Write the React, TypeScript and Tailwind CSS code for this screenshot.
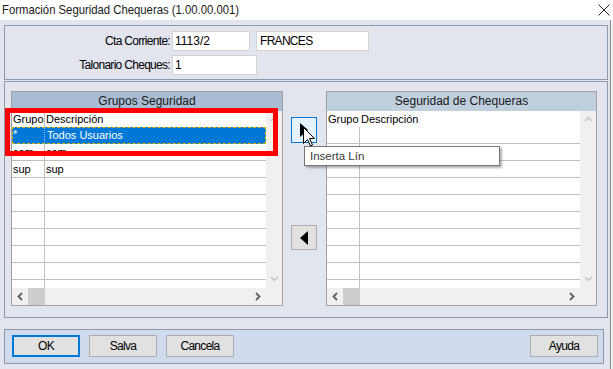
import React from 'react'

type Row = { g: string; d: string; sel?: boolean }

function ChevronUp() {
  return (
    <svg width="9" height="6" viewBox="0 0 9 6" fill="none" stroke="#c4c4c4" strokeWidth={1.5}>
      <path d="M1 5 4.5 1.5 8 5" />
    </svg>
  )
}

function ChevronDown() {
  return (
    <svg width="9" height="6" viewBox="0 0 9 6" fill="none" stroke="#c4c4c4" strokeWidth={1.5}>
      <path d="M1 1 4.5 4.5 8 1" />
    </svg>
  )
}

function ChevronLeft() {
  return (
    <svg width="6" height="9" viewBox="0 0 6 9" fill="none" stroke="#606060" strokeWidth={1.8}>
      <path d="M5 1 1.5 4.5 5 8" />
    </svg>
  )
}

function ChevronRight() {
  return (
    <svg width="6" height="9" viewBox="0 0 6 9" fill="none" stroke="#606060" strokeWidth={1.8}>
      <path d="M1 1 4.5 4.5 1 8" />
    </svg>
  )
}

function Grid({
  title,
  headerClass,
  widthClass,
  rows,
  headerDivider,
}: {
  title: string
  headerClass: string
  widthClass: string
  rows: Row[]
  headerDivider: boolean
}) {
  const filled = [...rows]
  while (filled.length < 10) filled.push({ g: '', d: '' })

  return (
    <div className={`flex h-[215px] flex-col border border-[#a0a0a0] ${widthClass}`}>
      <div className={`h-[19px] text-center text-[12px] leading-[19px] text-[#1a1a1a] ${headerClass}`}>
        {title}
      </div>
      <div className="flex h-[177px]">
        <div className="flex flex-1 flex-col overflow-hidden bg-white text-[11px] leading-[16px]">
          <div className="flex h-[16px] shrink-0">
            <div
              className={`w-[33px] shrink-0 pl-[1px] ${headerDivider ? 'border-r border-[#c0c0c0]' : ''}`}
            >
              Grupo
            </div>
            <div className="pl-[1px]">Descripción</div>
          </div>
          {filled.map((r, i) =>
            r.sel ? (
              <div
                key={i}
                className="flex h-[17px] shrink-0 border border-dashed border-[#d4b000] bg-[#0078d7] text-white"
              >
                <div className="w-[32px] shrink-0 border-r border-dotted border-[#8fc0ec] leading-[13px]">*</div>
                <div className="pl-[2px] leading-[15px]">{r.d}</div>
              </div>
            ) : (
              <div key={i} className="flex h-[17px] shrink-0 border-b border-[#c0c0c0]">
                <div className="w-[33px] shrink-0 border-r border-[#c0c0c0] pl-[1px]">{r.g}</div>
                <div className="pl-[1px]">{r.d}</div>
              </div>
            )
          )}
        </div>
        <div className="flex w-[16px] flex-col items-center justify-between bg-[#f0f0f0] pt-[5px] pb-[6px]">
          <ChevronUp />
          <ChevronDown />
        </div>
      </div>
      <div className="flex h-[17px] bg-[#f0f0f0]">
        <div className="flex w-[16px] items-center justify-center">
          <ChevronLeft />
        </div>
        <div className="w-[17px] bg-[#cdcdcd]" />
        <div className="flex-1" />
        <div className="flex w-[16px] items-center justify-center">
          <ChevronRight />
        </div>
        <div className="w-[16px]" />
      </div>
    </div>
  )
}

export default function App() {
  return (
    <div className="relative h-[369px] w-[613px] overflow-hidden bg-[#f3f3f3] font-['Liberation_Sans',Arial,sans-serif] text-black">
      <div className="flex h-[20px] w-[613px] items-center justify-between bg-white pl-[2px] pr-[3px]">
        <span className="inline-block origin-left scale-x-[0.87] whitespace-nowrap text-[13px] text-[#1a1a1a]">
          Formación Seguridad Chequeras (1.00.00.001)
        </span>
        <svg width="12" height="12" viewBox="0 0 12 12" stroke="#222" strokeWidth={1}>
          <path d="M0.5 0.5 11.5 11.5M11.5 0.5 0.5 11.5" />
        </svg>
      </div>

      <div className="h-[349px] w-[611px] border-r border-[#8a8a8a] bg-[#e2e5ed] pl-[4px] pt-[5px]">
        <div className="flex h-[55px] w-[604px] flex-col gap-[4px] border border-[#8e98a6] pt-[5px] text-[12px]">
          <div className="flex h-[20px] items-center">
            <div className="w-[165px] text-right tracking-[-0.7px]">Cta Corriente:</div>
            <div className="ml-[2px] h-[20px] w-[78px] border border-[#d4d4d4] bg-white pl-[2px] leading-[18px]">
              1113/2
            </div>
            <div className="ml-[6px] h-[20px] w-[113px] border border-[#d4d4d4] bg-white pl-[3px] leading-[18px] tracking-[-0.7px]">
              FRANCES
            </div>
          </div>
          <div className="flex h-[20px] items-center">
            <div className="w-[165px] text-right tracking-[-0.7px]">Talonario Cheques:</div>
            <div className="ml-[2px] h-[20px] w-[85px] border border-[#d4d4d4] bg-white pl-[2px] leading-[18px]">
              1
            </div>
          </div>
        </div>

        <div className="mt-[1px] flex h-[237px] w-[604px] border border-[#8e98a6] pl-[6px] pt-[9px]">
          <Grid
            title="Grupos Seguridad"
            headerClass="bg-[#a8bdd4]"
            widthClass="w-[272px]"
            headerDivider
            rows={[
              { g: '*', d: 'Todos Usuarios', sel: true },
              { g: 'com', d: 'com' },
              { g: 'sup', d: 'sup' },
            ]}
          />
          <div className="flex w-[43px] flex-col pl-[8px]">
            <div className="mt-[26px] flex h-[26px] w-[26px] items-center justify-center border border-[#0078d7] bg-[#e5f1fb]">
              <svg width="8" height="14" viewBox="0 0 8 14">
                <path d="M0 0 8 7 0 14Z" fill="#000" />
              </svg>
            </div>
            <div className="mt-[82px] flex h-[25px] w-[26px] items-center justify-center border border-[#adadad] bg-[#e1e1e1]">
              <svg width="8" height="14" viewBox="0 0 8 14">
                <path d="M8 0 0 7 8 14Z" fill="#000" />
              </svg>
            </div>
          </div>
          <Grid
            title="Seguridad de Chequeras"
            headerClass="bg-[#c0cfdd]"
            widthClass="w-[271px]"
            headerDivider={false}
            rows={[{ g: '', d: '' }]}
          />
        </div>

        <div className="mt-[11px] flex h-[35px] w-[600px] border border-[#8e98a6] bg-[#d1dbee] pl-[7px] pr-[5px] pt-[5px] text-[12px] tracking-[-0.7px]">
          <div className="flex h-[22px] w-[68px] items-center justify-center border-2 border-[#0078d7] bg-[#e1e1e1]">OK</div>
          <div className="ml-[9px] flex h-[22px] w-[68px] items-center justify-center border border-[#adadad] bg-[#e1e1e1]">Salva</div>
          <div className="ml-[9px] flex h-[22px] w-[68px] items-center justify-center border border-[#adadad] bg-[#e1e1e1]">Cancela</div>
          <div className="ml-auto flex h-[22px] w-[68px] items-center justify-center border border-[#adadad] bg-[#e1e1e1]">Ayuda</div>
        </div>
      </div>

      {/* annotation box */}
      <div className="absolute left-[5px] top-[108px] h-[48px] w-[273px] border-[5px] border-[#ff0000]" />

      {/* tooltip */}
      <div className="absolute left-[304px] top-[146px] h-[20px] w-[196px] border border-[#767676] bg-white pl-[5px] text-[11.5px] leading-[18px] text-[#3a3a3a] shadow-[2px_2px_2px_rgba(0,0,0,0.3)]">
        Inserta Lín
      </div>

      {/* mouse cursor */}
      <svg className="absolute left-[303px] top-[127px]" width="13" height="20" viewBox="0 0 13 20">
        <path d="M0.5 0.5V16.5L4.5 12.5 7.5 19 9.5 18 6.5 11.5H11.5Z" fill="#fff" stroke="#000" strokeWidth={1} />
      </svg>
    </div>
  )
}
